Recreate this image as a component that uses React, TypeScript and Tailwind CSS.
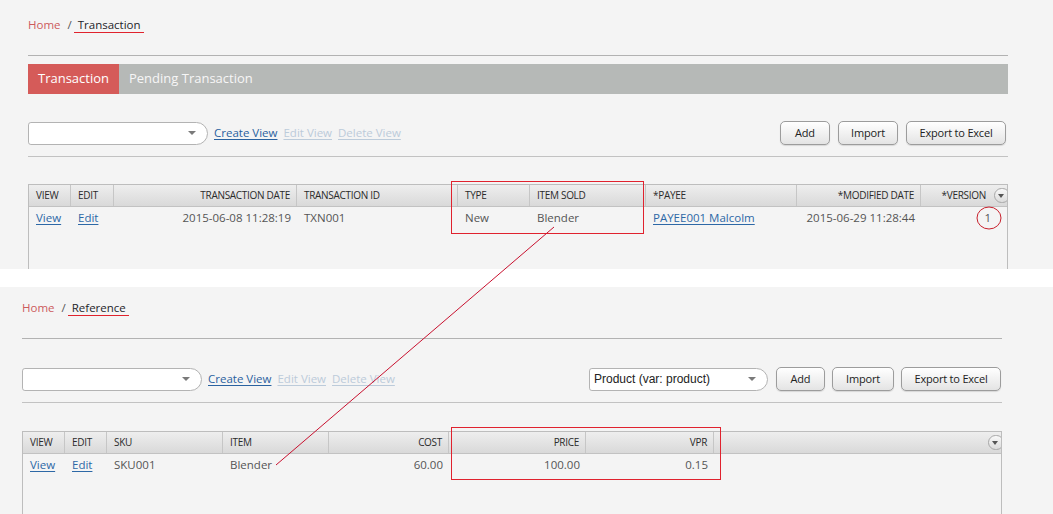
import clsx from 'clsx'

type Col = {
  label: string
  cls: string
  right?: boolean
}

type Cell = {
  text: string
  link?: boolean
}

const topCols: Col[] = [
  { label: 'VIEW', cls: 'w-[42px]' },
  { label: 'EDIT', cls: 'w-[43px]' },
  { label: 'TRANSACTION DATE', cls: 'w-[183px]', right: true },
  { label: 'TRANSACTION ID', cls: 'w-[161px]' },
  { label: 'TYPE', cls: 'w-[72px]' },
  { label: 'ITEM SOLD', cls: 'w-[116px]' },
  { label: '*PAYEE', cls: 'w-[151px]' },
  { label: '*MODIFIED DATE', cls: 'w-[124px]', right: true },
]

const topRow: Cell[] = [
  { text: 'View', link: true },
  { text: 'Edit', link: true },
  { text: '2015-06-08 11:28:19' },
  { text: 'TXN001' },
  { text: 'New' },
  { text: 'Blender' },
  { text: 'PAYEE001 Malcolm', link: true },
  { text: '2015-06-29 11:28:44' },
]

const refCols: Col[] = [
  { label: 'VIEW', cls: 'w-[42px]' },
  { label: 'EDIT', cls: 'w-[42px]' },
  { label: 'SKU', cls: 'w-[116px]' },
  { label: 'ITEM', cls: 'w-[106px]' },
  { label: 'COST', cls: 'w-[120px]', right: true },
  { label: 'PRICE', cls: 'w-[137px]', right: true },
  { label: 'VPR', cls: 'w-[128px]', right: true },
]

const refRow: Cell[] = [
  { text: 'View', link: true },
  { text: 'Edit', link: true },
  { text: 'SKU001' },
  { text: 'Blender' },
  { text: '60.00' },
  { text: '100.00' },
  { text: '0.15' },
]

function Breadcrumb({ page }: { page: string }) {
  return (
    <div className="flex items-center h-[15px] text-[11.5px] leading-[15px]">
      <span className="text-[#cc5a5c]">Home</span>
      <span className="text-[#555] ml-[7px] mr-[2px]">/</span>
      <span className="text-[#1e1e2a] pl-[4px] pr-[3px] border-b border-[#e0232d]">{page}</span>
    </div>
  )
}

function Arrow() {
  return <span className="w-0 h-0 border-l-[4px] border-r-[4px] border-t-[4px] border-l-transparent border-r-transparent border-t-[#7a7a7a]" />
}

function ViewSelect({ width, value }: { width: string; value?: string }) {
  return (
    <div
      className={clsx(
        'h-[23px] bg-white border border-[#b3b3b3] rounded-l-[3px] rounded-r-[12px] flex items-center justify-between pl-[4px] pr-[11px]',
        width
      )}
    >
      <span className="font-['Liberation_Sans',sans-serif] text-[12px] text-[#222]">{value}</span>
      <Arrow />
    </div>
  )
}

function ViewLinks() {
  return (
    <div className="flex items-center gap-[6px] ml-[6px] text-[11.5px]">
      <a className="text-[#2a62a0] underline underline-offset-2">Create View</a>
      <a className="text-[#bccbda] underline underline-offset-2">Edit View</a>
      <a className="text-[#bccbda] underline underline-offset-2">Delete View</a>
    </div>
  )
}

function Btn({ label, width }: { label: string; width: string }) {
  return (
    <button
      className={clsx(
        'h-[24px] rounded-[5px] border border-[#9c9c9c] bg-gradient-to-b from-white to-[#e4e4e4] shadow-[0_1px_1px_rgba(0,0,0,0.12)] text-[11px] text-[#222] tracking-[-0.2px] flex items-center justify-center',
        width
      )}
    >
      {label}
    </button>
  )
}

function MenuKnob() {
  return (
    <span className="w-[16px] h-[15px] -mr-[3px] shrink-0 rounded-full border border-[#a8a8a8] bg-gradient-to-b from-[#f8f8f8] to-[#dcdcdc] flex items-center justify-center">
      <span className="w-0 h-0 -ml-[2px] border-l-[3.5px] border-r-[3.5px] border-t-[4px] border-l-transparent border-r-transparent border-t-[#555]" />
    </span>
  )
}

function Grid({ cols, row, lastLabel, lastValue }: { cols: Col[]; row: Cell[]; lastLabel?: string; lastValue?: string }) {
  return (
    <div className="w-[980px] h-[140px] border-l border-r border-t border-[#bdbdbd] overflow-hidden">
      {/* header */}
      <div className="h-[22px] flex bg-gradient-to-b from-[#eeeeee] to-[#d9d9d9] border-b border-[#c2c2c2] text-[10px] text-[#2b2b2b] tracking-[-0.3px]">
        {cols.map((c) => (
          <div
            key={c.label}
            className={clsx(
              'shrink-0 h-full flex items-center px-[7px] border-r border-[#c6c6c6]',
              c.cls,
              c.right && 'justify-end pr-[6px]'
            )}
          >
            {c.label}
          </div>
        ))}
        <div className="flex-1 h-full flex items-center justify-end gap-[8px]">
          {lastLabel && <span>{lastLabel}</span>}
          <MenuKnob />
        </div>
      </div>

      {/* row */}
      <div className="h-[22px] flex text-[11.5px] text-[#555]">
        {cols.map((c, i) => {
          const cell = row[i]
          return (
            <div
              key={c.label}
              className={clsx(
                'shrink-0 h-full flex items-center px-[7px]',
                c.cls,
                c.right && 'justify-end pr-[6px]'
              )}
            >
              {cell.link ? <a className="text-[#2d68a6] underline underline-offset-2">{cell.text}</a> : cell.text}
            </div>
          )
        })}
        <div className="flex-1 h-full flex items-center justify-end pr-[16px]">{lastValue}</div>
      </div>
    </div>
  )
}

export default function App() {
  return (
    <div className="relative w-[1053px] h-[514px] overflow-hidden bg-white font-['Open_Sans',sans-serif]">
      {/* Transaction screen */}
      <section className="h-[269px] bg-[#f4f4f4] pl-[28px] overflow-hidden">
        <div className="w-[980px] flex flex-col">
          <div className="mt-[17px]">
            <Breadcrumb page="Transaction" />
          </div>
          <div className="mt-[23px] h-px bg-[#b2b2b2]" />

          <div className="mt-[8px] h-[30px] flex bg-[#b6b9b7] text-[13px]">
            <div className="w-[91px] bg-[#d55b59] text-white flex items-center pl-[10px]">Transaction</div>
            <div className="text-[#f6f6f6] flex items-center pl-[10px]">Pending Transaction</div>
          </div>

          <div className="mt-[27px] h-[24px] flex items-center">
            <ViewSelect width="w-[180px]" />
            <ViewLinks />
            <div className="ml-auto flex items-center gap-[8px] pr-[2px]">
              <Btn label="Add" width="w-[50px]" />
              <Btn label="Import" width="w-[60px]" />
              <Btn label="Export to Excel" width="w-[100px]" />
            </div>
          </div>

          <div className="mt-[11px] h-px bg-[#c2c2c2]" />

          <div className="mt-[27px]">
            <Grid cols={topCols} row={topRow} lastLabel="*VERSION" lastValue="1" />
          </div>
        </div>
      </section>

      <div className="h-[18px] bg-white" />

      {/* Reference screen */}
      <section className="h-[227px] bg-[#f4f4f4] pl-[22px] overflow-hidden">
        <div className="w-[980px] flex flex-col">
          <div className="mt-[13px]">
            <Breadcrumb page="Reference" />
          </div>
          <div className="mt-[23px] h-px bg-[#b2b2b2]" />

          <div className="mt-[28px] h-[24px] flex items-center">
            <ViewSelect width="w-[180px]" />
            <ViewLinks />
            <div className="ml-auto flex items-center pr-[1px]">
              <ViewSelect width="w-[179px]" value="Product (var: product)" />
              <div className="ml-[8px] flex items-center gap-[7px]">
                <Btn label="Add" width="w-[49px]" />
                <Btn label="Import" width="w-[62px]" />
                <Btn label="Export to Excel" width="w-[100px]" />
              </div>
            </div>
          </div>

          <div className="mt-[11px] h-px bg-[#c2c2c2]" />

          <div className="mt-[28px]">
            <Grid cols={refCols} row={refRow} />
          </div>
        </div>
      </section>

      {/* annotations */}
      <svg className="absolute inset-0 pointer-events-none" width="1053" height="514" viewBox="0 0 1053 514">
        <rect x="451.5" y="181.5" width="192" height="52" fill="none" stroke="#e0222e" strokeWidth="1" shapeRendering="crispEdges" />
        <rect x="451.5" y="427.5" width="269" height="52" fill="none" stroke="#e0222e" strokeWidth="1" shapeRendering="crispEdges" />
        <ellipse cx="989" cy="218" rx="12" ry="11" fill="none" stroke="#c8202c" strokeWidth="1" />
        <line x1="554" y1="227" x2="276" y2="465" stroke="#c8102e" strokeWidth="1" />
      </svg>
    </div>
  )
}
